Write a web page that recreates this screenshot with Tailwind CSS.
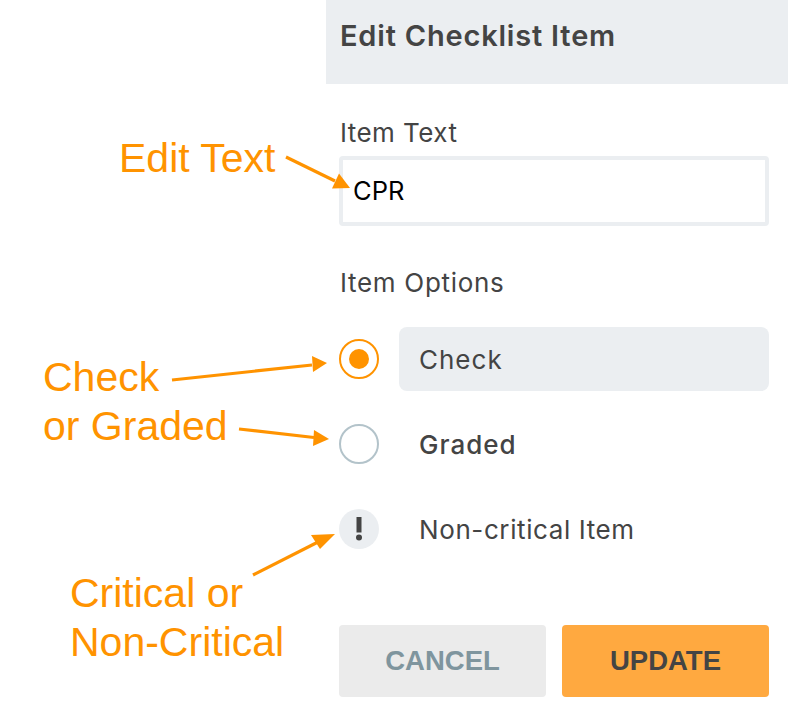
<!DOCTYPE html>
<html lang="en">
<head>
  <meta charset="UTF-8" />
  <title>Edit Checklist Item</title>
  <script src="https://cdn.jsdelivr.net/npm/@tailwindcss/browser@4"></script>
</head>
<body class="bg-white font-['Inter',sans-serif] text-[#444444]">
  <div class="relative w-[788px] h-[716px] overflow-hidden flex">

    <!-- spacer for annotation side -->
    <div class="w-[326px] shrink-0"></div>

    <!-- Panel -->
    <div class="w-[462px]">
      <div class="h-[84px] bg-[#ebeef1] pl-[14px] pt-[17px] text-[29px] leading-[38px] font-semibold tracking-[0.8px]">Edit Checklist Item</div>

      <div class="pl-[13px] pr-[19px] pt-[32px]">
        <label class="block pl-[1px] text-[26px] leading-[34px] tracking-[0.45px]">Item Text</label>
        <div class="mt-[6px] h-[70px] border-[4px] border-[#ebeef1] rounded-[4px] flex items-center pl-[10px] text-[25.5px] text-black">CPR</div>

        <div class="mt-[40px] pl-[1px] text-[26px] leading-[34px] tracking-[0.7px]">Item Options</div>

        <!-- Check -->
        <div class="mt-[27px] flex items-center gap-[20px]">
          <div class="w-[40px] h-[40px] rounded-full border-2 border-[#ff9300] flex items-center justify-center">
            <div class="w-[20px] h-[20px] rounded-full bg-[#ff9300]"></div>
          </div>
          <div class="flex-1 h-[64px] bg-[#ebeef1] rounded-[8px] flex items-center pl-[20px] text-[26px] tracking-[1px]">Check</div>
        </div>

        <!-- Graded -->
        <div class="mt-[21px] h-[64px] flex items-center gap-[20px]">
          <div class="w-[40px] h-[40px] rounded-full border-2 border-[#b3c3ca]"></div>
          <div class="pl-[20px] text-[26px] font-[450] tracking-[1px]">Graded</div>
        </div>

        <!-- Non-critical -->
        <div class="mt-[21px] h-[64px] flex items-center gap-[20px]">
          <div class="w-[40px] h-[40px] rounded-full bg-[#ebeef1] flex items-center justify-center">
            <svg width="8" height="24" viewBox="0 0 8 24">
              <rect x="1.5" y="0" width="5" height="15.5" fill="#444444" />
              <circle cx="4" cy="20.5" r="3" fill="#444444" />
            </svg>
          </div>
          <div class="pl-[20px] text-[26px] tracking-[0.6px]">Non-critical Item</div>
        </div>

        <!-- Buttons -->
        <div class="mt-[64px] flex gap-[16px]">
          <button class="flex-1 h-[72px] bg-[#ebebeb] rounded-[4px] font-['Liberation_Sans',sans-serif] font-bold text-[27.5px] text-[#7f959e]">CANCEL</button>
          <button class="flex-1 h-[72px] bg-[#ffa940] rounded-[4px] font-['Liberation_Sans',sans-serif] font-bold text-[27.5px] text-[#444444]">UPDATE</button>
        </div>
      </div>
    </div>

    <!-- Annotations over the screenshot -->
    <div class="absolute left-[119px] top-[134px] font-['Liberation_Sans',sans-serif] text-[41px] leading-[48px] text-[#ff9300]">Edit Text</div>
    <div class="absolute left-[43px] top-[353px] font-['Liberation_Sans',sans-serif] text-[41px] leading-[49px] text-[#ff9300]">Check<br>or Graded</div>
    <div class="absolute left-[70px] top-[569px] font-['Liberation_Sans',sans-serif] text-[41px] leading-[49px] text-[#ff9300]">Critical or<br>Non-Critical</div>

    <svg class="absolute left-0 top-0" width="788" height="716" viewBox="0 0 788 716" fill="none">
      <g stroke="#ff9300" stroke-width="3.2">
        <path d="M286 157 L335 181" />
        <path d="M172 380 L312 365" />
        <path d="M239 429 L314 437.5" />
        <path d="M253 575 L320 541" />
      </g>
      <g fill="#ff9300">
        <path d="M350 188 L332 188.5 L339 173.5 Z" />
        <path d="M327 363 L313 372 L312 356 Z" />
        <path d="M329 439 L313 446 L314 430 Z" />
        <path d="M335 534 L320 549 L311 535 Z" />
      </g>
    </svg>
  </div>
</body>
</html>
